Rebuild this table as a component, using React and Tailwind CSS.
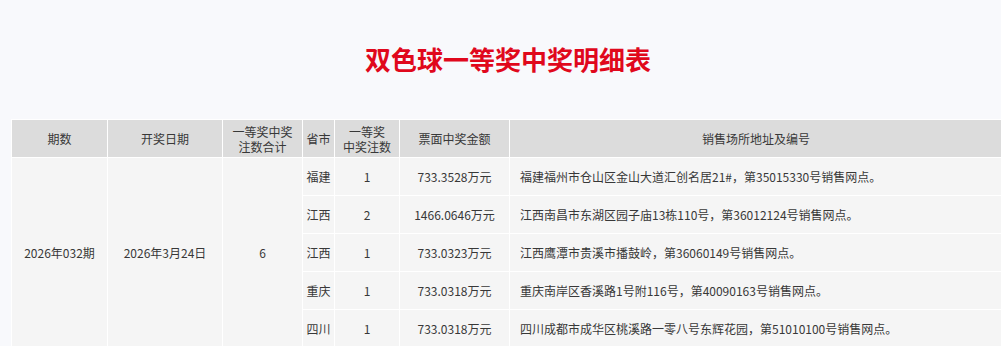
import React from "react";

const rows = [
  ["福建", "1", "733.3528万元", "福建福州市仓山区金山大道汇创名居21#，第35015330号销售网点。"],
  ["江西", "2", "1466.0646万元", "江西南昌市东湖区园子庙13栋110号，第36012124号销售网点。"],
  ["江西", "1", "733.0323万元", "江西鹰潭市贵溪市播鼓岭，第36060149号销售网点。"],
  ["重庆", "1", "733.0318万元", "重庆南岸区香溪路1号附116号，第40090163号销售网点。"],
  ["四川", "1", "733.0318万元", "四川成都市成华区桃溪路一零八号东辉花园，第51010100号销售网点。"],
];

const font = { fontFamily: '"Microsoft YaHei", "Noto Sans CJK SC", sans-serif' };

export default function App() {
  const th = "border border-white bg-[#dcdcdc] font-normal text-center align-middle leading-[15px] p-0";
  const td = "border border-white bg-[#f5f5f5] text-center align-middle p-0";
  return (
    <div className="w-[1001px] h-[346px] overflow-hidden bg-[#f8f9fc] text-[#383838] text-[12px]" style={font}>
      <div className="h-[119px] flex items-center justify-center pl-[15px] pb-[2px]">
        <h1 className="text-[26px] font-bold text-[#e0081c]">双色球一等奖中奖明细表</h1>
      </div>
      <div className="pl-[11px]">
        <table className="border-collapse table-fixed w-[992px]">
          <colgroup>
            <col className="w-[96px]" />
            <col className="w-[115px]" />
            <col className="w-[80px]" />
            <col className="w-[32px]" />
            <col className="w-[65px]" />
            <col className="w-[110px]" />
            <col />
          </colgroup>
          <thead>
            <tr className="h-[38px]">
              <th className={th}>期数</th>
              <th className={th}>开奖日期</th>
              <th className={th}>
                <div>一等奖中奖</div>
                <div>注数合计</div>
              </th>
              <th className={th}>省市</th>
              <th className={th}>
                <div>一等奖</div>
                <div>中奖注数</div>
              </th>
              <th className={th}>票面中奖金额</th>
              <th className={th}>销售场所地址及编号</th>
            </tr>
          </thead>
          <tbody>
            {rows.map((r, i) => (
              <tr key={i} className="h-[38px]">
                {i === 0 && (
                  <>
                    <td rowSpan={5} className={td}>2026年032期</td>
                    <td rowSpan={5} className={td}>2026年3月24日</td>
                    <td rowSpan={5} className={td}>6</td>
                  </>
                )}
                <td className={td}>{r[0]}</td>
                <td className={td}>{r[1]}</td>
                <td className={td}>{r[2]}</td>
                <td className="border border-white bg-[#f5f5f5] text-left align-middle py-0 pr-0 pl-[10px]">{r[3]}</td>
              </tr>
            ))}
          </tbody>
        </table>
      </div>
    </div>
  );
}
